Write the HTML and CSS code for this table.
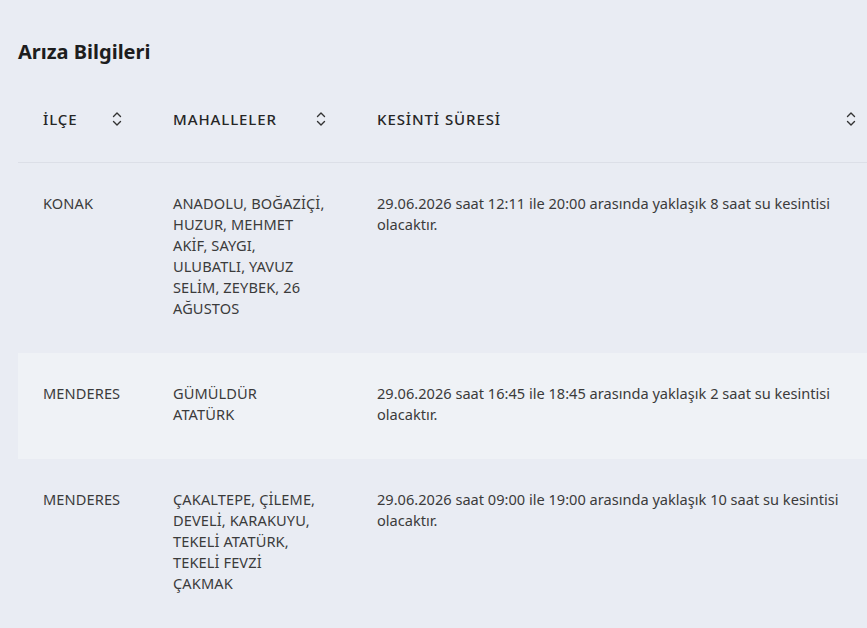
FILE: index.html
```html
<!DOCTYPE html>
<html lang="tr">
<head>
<meta charset="utf-8">
<title>Arıza Bilgileri</title>
<link rel="stylesheet" href="styles.css">
</head>
<body>
<div class="page">
  <h2 class="title">Arıza Bilgileri</h2>
  <div class="table-wrap">
    <table class="table">
      <colgroup>
        <col class="c1"><col class="c2"><col class="c3">
      </colgroup>
      <thead>
        <tr>
          <th><div class="th-in"><span>İLÇE</span><svg class="sort" viewBox="0 0 10 18" width="10" height="18"><path d="M1.5 6.5 L5 3 L8.5 6.5 M1.5 11.5 L5 15 L8.5 11.5" fill="none" stroke="#333" stroke-width="1.4" stroke-linecap="round" stroke-linejoin="round"/></svg></div></th>
          <th><div class="th-in"><span>MAHALLELER</span><svg class="sort" viewBox="0 0 10 18" width="10" height="18"><path d="M1.5 6.5 L5 3 L8.5 6.5 M1.5 11.5 L5 15 L8.5 11.5" fill="none" stroke="#333" stroke-width="1.4" stroke-linecap="round" stroke-linejoin="round"/></svg></div></th>
          <th><div class="th-in"><span>KESİNTİ SÜRESİ</span><svg class="sort" viewBox="0 0 10 18" width="10" height="18"><path d="M1.5 6.5 L5 3 L8.5 6.5 M1.5 11.5 L5 15 L8.5 11.5" fill="none" stroke="#333" stroke-width="1.4" stroke-linecap="round" stroke-linejoin="round"/></svg></div></th>
        </tr>
      </thead>
      <tbody>
        <tr>
          <td class="caps">KONAK</td>
          <td class="caps list">ANADOLU, BOĞAZİÇİ, HUZUR, MEHMET AKİF, SAYGI, ULUBATLI, YAVUZ SELİM, ZEYBEK, 26 AĞUSTOS</td>
          <td>29.06.2026 saat 12:11 ile 20:00 arasında yaklaşık 8 saat su kesintisi olacaktır.</td>
        </tr>
        <tr class="alt">
          <td class="caps">MENDERES</td>
          <td class="caps list">GÜMÜLDÜR<br>ATATÜRK</td>
          <td>29.06.2026 saat 16:45 ile 18:45 arasında yaklaşık 2 saat su kesintisi olacaktır.</td>
        </tr>
        <tr>
          <td class="caps">MENDERES</td>
          <td class="caps list">ÇAKALTEPE, ÇİLEME, DEVELİ, KARAKUYU, TEKELİ ATATÜRK, TEKELİ FEVZİ ÇAKMAK</td>
          <td>29.06.2026 saat 09:00 ile 19:00 arasında yaklaşık 10 saat su kesintisi olacaktır.</td>
        </tr>
      </tbody>
    </table>
  </div>
</div>
</body>
</html>
```

FILE: styles.css
```css
html, body {
  margin: 0;
  padding: 0;
  background: #e9ecf3;
  overflow: hidden;
}
body {
  font-family: "Noto Sans", "Open Sans", sans-serif;
  color: #3b3b3b;
  width: 867px;
  height: 628px;
}
.page {
  padding: 0 0 0 18px;
}
.title {
  margin: 0;
  padding-top: 39px;
  font-size: 20px;
  line-height: 26px;
  font-weight: 700;
  color: #1d1d1d;
}
.table-wrap {
  padding-top: 13px;
  width: 864px;
}
.table {
  border-collapse: collapse;
  table-layout: fixed;
  width: 864px;
}
.c1 { width: 130px; }
.c2 { width: 204px; }
.c3 { width: 530px; }
th {
  text-align: left;
  padding: 31px 26px 32px 25px;
  font-size: 15px;
  line-height: 21px;
  font-weight: 500;
  letter-spacing: 0.9px;
  color: #262626;
  border-bottom: 1px solid #dcdfe7;
}
.th-in {
  display: flex;
  justify-content: space-between;
  align-items: center;
}
.sort { display: block; margin-top: -2px; }
td {
  vertical-align: top;
  padding: 30px 26px 34px 25px;
  font-size: 14.6px;
  line-height: 21px;
  color: #3b3b3b;
}
td.caps { letter-spacing: 0.1px; }
td.list { padding-right: 27.5px; }
tr.alt td { background: #eff2f6; }
```
